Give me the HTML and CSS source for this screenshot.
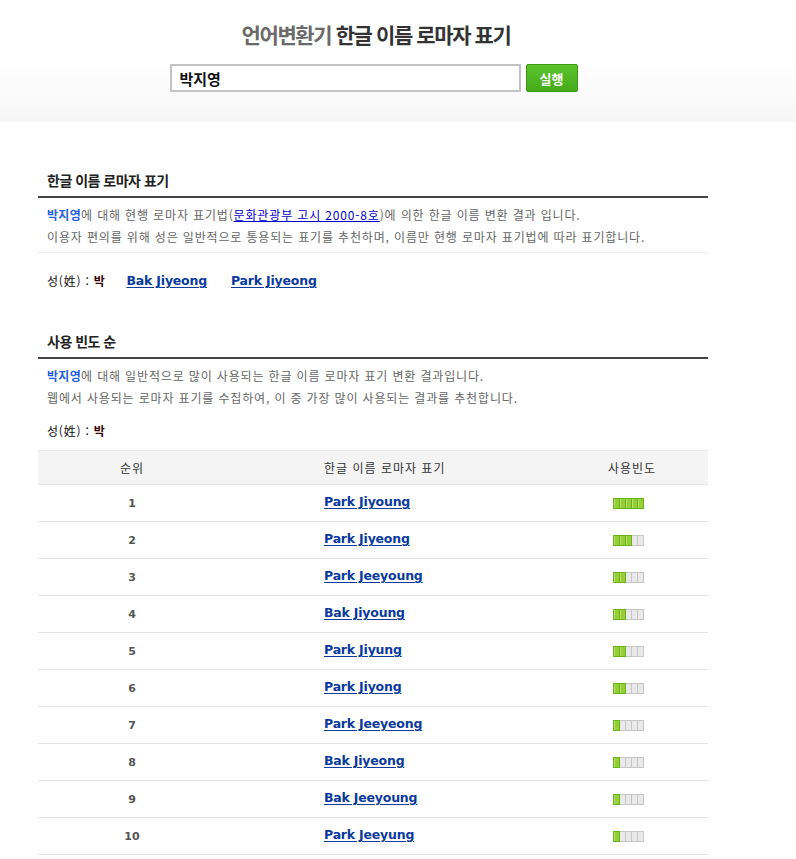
FILE: index.html
```html
<!DOCTYPE html>
<html lang="ko">
<head>
<meta charset="utf-8">
<title>한글 이름 로마자 표기</title>
<link rel="stylesheet" href="styles.css">
</head>
<body>
<header class="top">
  <h1 class="logo"><span class="logo-sub">언어변환기</span> <span class="logo-main">한글 이름 로마자 표기</span></h1>
  <form class="search">
    <input class="search-input" type="text" value="박지영">
    <button class="search-btn" type="button">실행</button>
  </form>
</header>
<main class="content">
  <section class="sec sec-first">
    <h2 class="sec-title">한글 이름 로마자 표기</h2>
    <div class="desc desc-line">
      <p><b class="name">박지영</b>에 대해 현행 로마자 표기법(<a class="law" href="#">문화관광부 고시 2000-8호</a>)에 의한 한글 이름 변환 결과 입니다.</p>
      <p>이용자 편의를 위해 성은 일반적으로 통용되는 표기를 추천하며, 이름만 현행 로마자 표기법에 따라 표기합니다.</p>
    </div>
    <div class="surname">성(姓) : <b class="sn">박</b><a class="rom first" href="#">Bak Jiyeong</a><a class="rom" href="#">Park Jiyeong</a></div>
  </section>
  <section class="sec sec-second">
    <h2 class="sec-title">사용 빈도 순</h2>
    <div class="desc">
      <p><b class="name">박지영</b>에 대해 일반적으로 많이 사용되는 한글 이름 로마자 표기 변환 결과입니다.</p>
      <p>웹에서 사용되는 로마자 표기를 수집하여, 이 중 가장 많이 사용되는 결과를 추천합니다.</p>
    </div>
    <div class="surname surname-2">성(姓) : <b class="sn">박</b></div>
    <div class="table">
      <div class="row head"><div class="c1">순위</div><div class="c2">한글 이름 로마자 표기</div><div class="c3">사용빈도</div></div>
      <div class="row"><div class="c1 num">1</div><div class="c2"><a class="rom" href="#">Park Jiyoung</a></div><div class="c3"><span class="bar"><i class="on"></i><i class="on"></i><i class="on"></i><i class="on"></i><i class="on"></i></span></div></div>
      <div class="row"><div class="c1 num">2</div><div class="c2"><a class="rom" href="#">Park Jiyeong</a></div><div class="c3"><span class="bar"><i class="on"></i><i class="on"></i><i class="on"></i><i></i><i></i></span></div></div>
      <div class="row"><div class="c1 num">3</div><div class="c2"><a class="rom" href="#">Park Jeeyoung</a></div><div class="c3"><span class="bar"><i class="on"></i><i class="on"></i><i></i><i></i><i></i></span></div></div>
      <div class="row"><div class="c1 num">4</div><div class="c2"><a class="rom" href="#">Bak Jiyoung</a></div><div class="c3"><span class="bar"><i class="on"></i><i class="on"></i><i></i><i></i><i></i></span></div></div>
      <div class="row"><div class="c1 num">5</div><div class="c2"><a class="rom" href="#">Park Jiyung</a></div><div class="c3"><span class="bar"><i class="on"></i><i class="on"></i><i></i><i></i><i></i></span></div></div>
      <div class="row"><div class="c1 num">6</div><div class="c2"><a class="rom" href="#">Park Jiyong</a></div><div class="c3"><span class="bar"><i class="on"></i><i class="on"></i><i></i><i></i><i></i></span></div></div>
      <div class="row"><div class="c1 num">7</div><div class="c2"><a class="rom" href="#">Park Jeeyeong</a></div><div class="c3"><span class="bar"><i class="on"></i><i></i><i></i><i></i><i></i></span></div></div>
      <div class="row"><div class="c1 num">8</div><div class="c2"><a class="rom" href="#">Bak Jiyeong</a></div><div class="c3"><span class="bar"><i class="on"></i><i></i><i></i><i></i><i></i></span></div></div>
      <div class="row"><div class="c1 num">9</div><div class="c2"><a class="rom" href="#">Bak Jeeyoung</a></div><div class="c3"><span class="bar"><i class="on"></i><i></i><i></i><i></i><i></i></span></div></div>
      <div class="row"><div class="c1 num">10</div><div class="c2"><a class="rom" href="#">Park Jeeyung</a></div><div class="c3"><span class="bar"><i class="on"></i><i></i><i></i><i></i><i></i></span></div></div>
    </div>
  </section>
</main>
</body>
</html>
```

FILE: styles.css
```css
* { box-sizing: border-box; }
html, body { margin: 0; padding: 0; background: #fff; }
body {
  font-family: "Noto Sans CJK KR", "Noto Sans", sans-serif;
  font-size: 12px;
  color: #666;
  overflow: hidden;
}
.top {
  height: 122px;
  padding-right: 44px;
  background: linear-gradient(to bottom, #fff 0, #fff 62px, #f6f6f6 122px);
  display: flex;
  flex-direction: column;
  align-items: center;
}
.logo {
  margin: 18px 0 0 0;
  height: 32px;
  line-height: 32px;
  font-size: 21px;
  font-weight: bold;
  letter-spacing: -1.4px;
  white-space: nowrap;
}
.logo-sub { color: #6a6a6a; }
.logo-main { color: #333; }
.search {
  margin: 14px 0 0 0;
  display: flex;
  gap: 5px;
  padding-right: 5px;
}
.search-input {
  width: 351px;
  height: 28px;
  border: 2px solid #c3c3c3;
  padding: 0 8px;
  font-family: "Noto Sans CJK KR", sans-serif;
  font-size: 15px;
  font-weight: bold;
  color: #111;
  background: #fff;
  outline: none;
}
.search-btn {
  width: 52px;
  height: 28px;
  border: 1px solid #3c9a12;
  border-radius: 2px;
  background: linear-gradient(to bottom, #5cc22c, #45ab1a);
  color: #fff;
  font-family: "Noto Sans CJK KR", sans-serif;
  font-size: 13px;
  font-weight: bold;
  padding: 0;
}
.content {
  width: 670px;
  margin-left: 38px;
}
.sec-first { padding-top: 48px; }
.sec-second { padding-top: 40px; }
.sec-title {
  margin: 0;
  height: 26px;
  line-height: 20px;
  padding-left: 9px;
  font-size: 14px;
  font-weight: bold;
  color: #222;
  letter-spacing: -0.5px;
  border-bottom: 2px solid #444;
  box-sizing: content-box;
  padding-bottom: 0;
}
.desc {
  padding: 6px 0 0 9px;
  letter-spacing: 0.85px;
}
.desc p {
  margin: 0;
  line-height: 22px;
  white-space: nowrap;
}
.desc-line {
  padding-bottom: 4px;
  border-bottom: 1px solid #ececec;
}
.name { color: #1f5fe0; font-weight: bold; letter-spacing: 0.3px; }
.law { color: #0000cc; text-decoration: underline; }
.surname {
  margin-top: 18px;
  padding-left: 9px;
  height: 20px;
  line-height: 20px;
  color: #111;
  display: flex;
  align-items: center;
  letter-spacing: 0.8px;
}
.surname-2 { margin-top: 12px; }
.sn { color: #3a0000; font-weight: bold; margin-left: 4px; }
.rom {
  font-family: "DejaVu Sans", Verdana, sans-serif;
  font-weight: bold;
  font-size: 12.5px;
  color: #0a3a9e;
  text-decoration: underline;
  text-underline-offset: 2px;
  letter-spacing: -0.2px;
}
.surname .rom { margin-left: 24px; }
.surname .rom.first { margin-left: 21px; }
.table {
  margin-top: 9px;
  border-top: 1px solid #e8e8e8;
}
.row {
  display: grid;
  grid-template-columns: 188px 330px 152px;
  height: 37px;
  align-items: center;
  border-bottom: 1px solid #e4e4e4;
}
.row.head {
  height: 34px;
  background: #f4f4f4;
  border-bottom: 1px solid #e6e6e6;
  color: #333;
  font-size: 12px;
  letter-spacing: 1px;
}
.c1 { text-align: center; }
.c2 { padding-left: 98px; white-space: nowrap; }
.c3 { text-align: center; }
.row:not(.head) .c2 { padding-bottom: 5px; }
.row:not(.head) .c3 { padding-right: 7px; padding-bottom: 4px; }
.num {
  font-family: "DejaVu Sans", Verdana, sans-serif;
  font-weight: bold;
  font-size: 11px;
  color: #555;
  padding-top: 1px;
}
.bar {
  display: inline-flex;
  vertical-align: middle;
}
.bar i {
  display: block;
  width: 7px;
  height: 11px;
  margin-left: -1px;
  border: 1px solid #c6c6c6;
  background: #e9e9e9;
}
.bar i:first-child { margin-left: 0; }
.bar i.on {
  border-color: #67b51b;
  background: #95cf35;
  box-shadow: inset 1px 0 0 #b9df72;
  z-index: 1;
}
```
